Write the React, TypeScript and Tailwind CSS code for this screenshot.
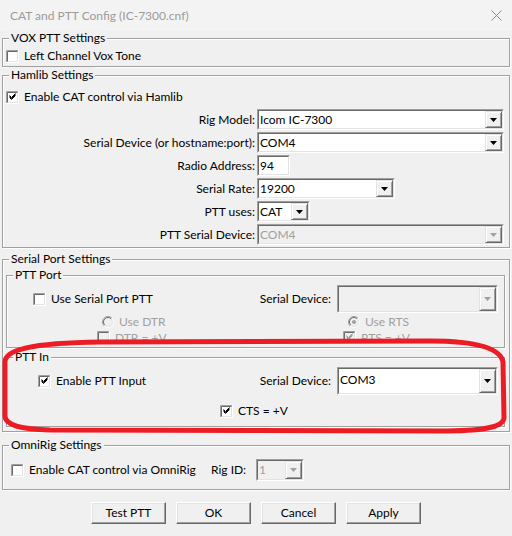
import React from 'react';

type BoxProps = { checked?: boolean; disabled?: boolean };

// classic sunken checkbox, 13x13
const CheckBox: React.FC<BoxProps> = ({ checked, disabled }) => (
  <svg width="13" height="13" viewBox="0 0 13 13" className="shrink-0">
    <rect width="13" height="13" fill={disabled ? '#f0f0f0' : '#fff'} />
    <path d="M0.5 13V0.5H13" fill="none" stroke="#a0a0a0" />
    <path d="M0 12.5H12.5V0" fill="none" stroke="#fff" />
    <path d="M1.5 11.5V1.5H11.5" fill="none" stroke="#696969" />
    <path d="M2 11.5H11.5V2" fill="none" stroke="#e3e3e3" />
    {checked &&
      [0, 1, 2].map((d) => (
        <path
          key={d}
          d={`M3.5 ${4.5 + d}L5.5 ${6.5 + d}L9.5 ${2.5 + d}`}
          fill="none"
          stroke={disabled ? '#a0a0a0' : '#000'}
        />
      ))}
  </svg>
);

const Radio: React.FC<BoxProps> = ({ checked, disabled }) => (
  <svg width="12" height="12" viewBox="0 0 12 12" className="shrink-0">
    <circle cx="6" cy="6" r="4.5" fill={disabled ? '#f0f0f0' : '#fff'} />
    <path d="M2.1 9.9A5.5 5.5 0 0 1 9.9 2.1" fill="none" stroke="#a0a0a0" />
    <path d="M9.9 2.1A5.5 5.5 0 0 1 2.1 9.9" fill="none" stroke="#fff" />
    <path d="M2.8 9.2A4.5 4.5 0 0 1 9.2 2.8" fill="none" stroke="#696969" />
    <path d="M9.2 2.8A4.5 4.5 0 0 1 2.8 9.2" fill="none" stroke="#e3e3e3" />
    {checked && <circle cx="6" cy="6" r="2" fill={disabled ? '#a0a0a0' : '#000'} />}
  </svg>
);

const Arrow: React.FC<{ disabled?: boolean }> = ({ disabled }) => (
  <div className="flex w-[17px] shrink-0 items-center justify-center border border-t-[#e3e3e3] border-l-[#e3e3e3] border-r-[#696969] border-b-[#696969] bg-[#f0f0f0] shadow-[inset_1px_1px_0_#fff,inset_-1px_-1px_0_#a0a0a0]">
    <svg width="7" height="4" viewBox="0 0 7 4">
      <path d="M0 0H7L3.5 4Z" fill={disabled ? '#a0a0a0' : '#000'} />
    </svg>
  </div>
);

interface ComboProps {
  value?: string;
  className: string;
  disabled?: boolean;
  top?: boolean;
  noArrow?: boolean;
}

const Combo: React.FC<ComboProps> = ({ value, className, disabled, top, noArrow }) => (
  <div className={`flex shrink-0 border border-t-[#a0a0a0] border-l-[#a0a0a0] border-r-white border-b-white ${className}`}>
    <div
      className={`flex min-w-0 flex-1 border border-t-[#696969] border-l-[#696969] border-r-[#e3e3e3] border-b-[#e3e3e3] ${
        disabled ? 'bg-[#f0f0f0]' : 'bg-white'
      }`}
    >
      <span
        className={`min-w-0 flex-1 truncate pl-[1px] leading-[16px] ${top ? 'self-start pt-[3px]' : 'self-center'} ${
          disabled ? 'text-[#a0a0a0]' : 'text-black'
        }`}
      >
        {value}
      </span>
      {!noArrow && <Arrow disabled={disabled} />}
    </div>
  </div>
);

const Group: React.FC<{ title: string; className?: string; children: React.ReactNode }> = ({
  title,
  className = '',
  children,
}) => (
  <div className={`relative border border-[#a0a0a0] shadow-[inset_1px_1px_0_#fff,1px_1px_0_#fff] ${className}`}>
    <span className="absolute -top-[9px] left-[6px] bg-[#f0f0f0] px-[2px] leading-[16px] text-black">{title}</span>
    {children}
  </div>
);

const Button: React.FC<{ label: string }> = ({ label }) => (
  <div className="flex h-[22px] w-[75px] items-center justify-center border border-t-white border-l-white border-r-[#696969] border-b-[#696969] bg-[#f0f0f0] shadow-[inset_-1px_-1px_0_#a0a0a0,inset_1px_1px_0_#e3e3e3]">
    {label}
  </div>
);

export default function App() {
  const rows: { label: string; field: React.ReactNode }[] = [
    { label: 'Rig Model:', field: <Combo value="Icom IC-7300" className="h-[21px] w-[247px]" /> },
    { label: 'Serial Device (or hostname:port):', field: <Combo value="COM4" className="h-[21px] w-[247px]" /> },
    { label: 'Radio Address:', field: <Combo value="94" className="h-[21px] w-[33px]" noArrow /> },
    { label: 'Serial Rate:', field: <Combo value="19200" className="h-[21px] w-[138px]" /> },
    { label: 'PTT uses:', field: <Combo value="CAT" className="h-[21px] w-[53px]" /> },
    { label: 'PTT Serial Device:', field: <Combo value="COM4" className="h-[21px] w-[247px]" disabled /> },
  ];

  return (
    <div className="relative h-[536px] w-[512px] overflow-hidden bg-[#f0f0f0] font-['Lato',sans-serif] text-[12px] leading-[16px] text-black">
      {/* title bar */}
      <div className="flex h-[31px] items-center justify-between bg-[#f3f3f3] pl-[10px] pr-[10px]">
        <span className="text-[#9b9b9b]">CAT and PTT Config (IC-7300.cnf)</span>
        <svg width="11" height="11" viewBox="0 0 11 11">
          <path d="M0.5 0.5L10.5 10.5M10.5 0.5L0.5 10.5" stroke="#8a8a8a" />
        </svg>
      </div>

      <div className="px-[2px]">
        <Group title="VOX PTT Settings" className="mt-[7px] pb-[2px] pl-[3px] pt-[9px]">
          <div className="flex h-[16px] items-center gap-[5px]">
            <CheckBox />
            <span>Left Channel Vox Tone</span>
          </div>
        </Group>

        <Group title="Hamlib Settings" className="mt-[8px] pb-[2px] pl-[3px] pt-[13px]">
          <div className="flex h-[16px] items-center gap-[5px]">
            <CheckBox checked />
            <span>Enable CAT control via Hamlib</span>
          </div>
          <div className="mt-[4px] grid grid-cols-[249px_1fr] items-center gap-x-[2px] gap-y-[2px]">
            {rows.map((r) => (
              <React.Fragment key={r.label}>
                <span className="text-right">{r.label}</span>
                {r.field}
              </React.Fragment>
            ))}
          </div>
        </Group>

        <Group title="Serial Port Settings" className="mt-[11px] pb-[4px] pl-[3px] pr-[4px]">
          <Group title="PTT Port" className="mt-[15px] pb-[3px] pt-[9px]">
            <div className="flex h-[28px] items-center">
              <div className="ml-[26px] flex items-center gap-[5px]">
                <CheckBox />
                <span>Use Serial Port PTT</span>
              </div>
              <span className="ml-auto mr-[6px]">Serial Device:</span>
              <Combo className="mr-[6px] h-[28px] w-[161px]" disabled />
            </div>
            <div className="mt-[3px] flex h-[12px] items-center pl-[95px] text-[#a0a0a0]">
              <div className="flex w-[246px] items-center gap-[5px]">
                <Radio disabled />
                <span>Use DTR</span>
              </div>
              <div className="flex items-center gap-[5px]">
                <Radio checked disabled />
                <span>Use RTS</span>
              </div>
            </div>
            <div className="mt-[3px] flex h-[13px] items-center pl-[90px] text-[#a0a0a0]">
              <div className="flex w-[246px] items-center gap-[5px]">
                <CheckBox disabled />
                <span>DTR = +V</span>
              </div>
              <div className="flex items-center gap-[5px]">
                <CheckBox checked disabled />
                <span>RTS = +V</span>
              </div>
            </div>
          </Group>

          <Group title="PTT In" className="mt-[9px] pb-[7px] pt-[9px]">
            <div className="flex h-[28px] items-center">
              <div className="ml-[31px] flex items-center gap-[5px]">
                <CheckBox checked />
                <span>Enable PTT Input</span>
              </div>
              <span className="ml-auto mr-[6px]">Serial Device:</span>
              <Combo value="COM3" className="mr-[6px] h-[28px] w-[161px]" top />
            </div>
            <div className="mt-[8px] flex h-[16px] items-center gap-[5px] pl-[213px]">
              <CheckBox checked />
              <span>CTS = +V</span>
            </div>
          </Group>
        </Group>

        <Group title="OmniRig Settings" className="mt-[13px] pb-[8px] pl-[8px] pt-[13px]">
          <div className="flex h-[22px] items-center">
            <div className="flex w-[200px] items-center gap-[5px]">
              <CheckBox />
              <span>Enable CAT control via OmniRig</span>
            </div>
            <span className="w-[45px]">Rig ID:</span>
            <Combo value="1" className="h-[22px] w-[48px]" disabled />
          </div>
        </Group>

        <div className="mt-[12px] flex justify-center gap-[10px]">
          <Button label="Test PTT" />
          <Button label="OK" />
          <Button label="Cancel" />
          <Button label="Apply" />
        </div>
      </div>

      {/* hand-drawn red annotation around the PTT In box */}
      <svg className="pointer-events-none absolute left-0 top-0" width="512" height="536" viewBox="0 0 512 536">
        <path
          d="M100 342L430 341C470 341 500 346 503 362L504 418C503 428 480 431 440 431L50 430C20 429 5 425 5 416L5 362C5 350 30 343 100 342Z"
          fill="none"
          stroke="#ed1c24"
          strokeWidth="5"
        />
      </svg>
    </div>
  );
}
